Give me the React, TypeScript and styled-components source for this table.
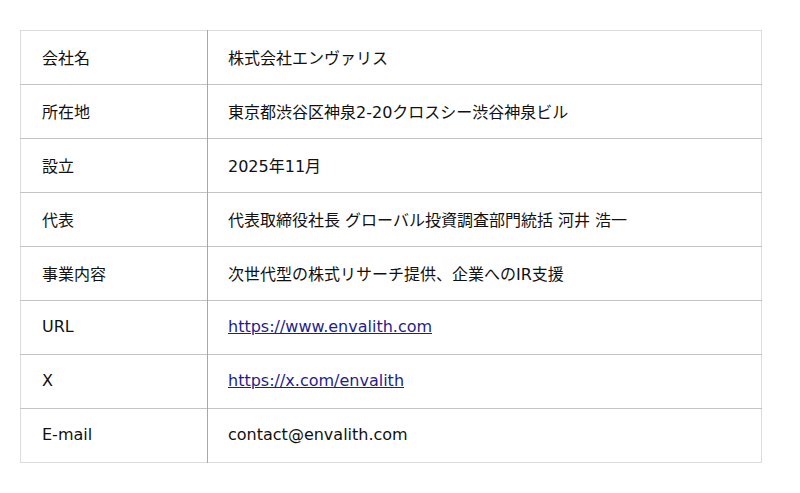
import styled, { createGlobalStyle } from 'styled-components'

const GlobalStyle = createGlobalStyle`
  body {
    margin: 0;
    background: #fff;
    font-family: "DejaVu Sans", "Noto Sans CJK JP", sans-serif;
    color: #111;
  }
`

type Row = { label: string; value: string; href?: string }

const rows: Row[] = [
  { label: '会社名', value: '株式会社エンヴァリス' },
  { label: '所在地', value: '東京都渋谷区神泉2-20クロスシー渋谷神泉ビル' },
  { label: '設立', value: '2025年11月' },
  { label: '代表', value: '代表取締役社長 グローバル投資調査部門統括 河井 浩一' },
  { label: '事業内容', value: '次世代型の株式リサーチ提供、企業へのIR支援' },
  { label: 'URL', value: 'https://www.envalith.com', href: 'https://www.envalith.com' },
  { label: 'X', value: 'https://x.com/envalith', href: 'https://x.com/envalith' },
  { label: 'E-mail', value: 'contact@envalith.com' },
]

export default function App() {
  return (
    <Page>
      <GlobalStyle />
      <InfoTable>
        <tbody>
          {rows.map((r) => (
            <Row key={r.label}>
              <LabelCell>{r.label}</LabelCell>
              <ValueCell>
                {r.href ? <Link href={r.href}>{r.value}</Link> : r.value}
              </ValueCell>
            </Row>
          ))}
        </tbody>
      </InfoTable>
    </Page>
  )
}

const Page = styled.div`
  padding: 30px 38px 30px 20px;
`

const InfoTable = styled.table`
  width: 742px;
  border-collapse: collapse;
  border: 1px solid #dcdcdc;
  font-size: 16px;
`

const Row = styled.tr`
  height: 54px;
  border-bottom: 1px solid #c4c4c4;

  &:last-child {
    border-bottom: 1px solid #dcdcdc;
  }
`

const LabelCell = styled.td`
  width: 165px;
  padding: 0 0 2px 21px;
  border-right: 1px solid #a8a8a8;
  vertical-align: middle;
`

const ValueCell = styled.td`
  padding: 0 0 2px 20px;
  vertical-align: middle;
`

const Link = styled.a`
  color: #1e1e8c;
  text-decoration: underline;
`
